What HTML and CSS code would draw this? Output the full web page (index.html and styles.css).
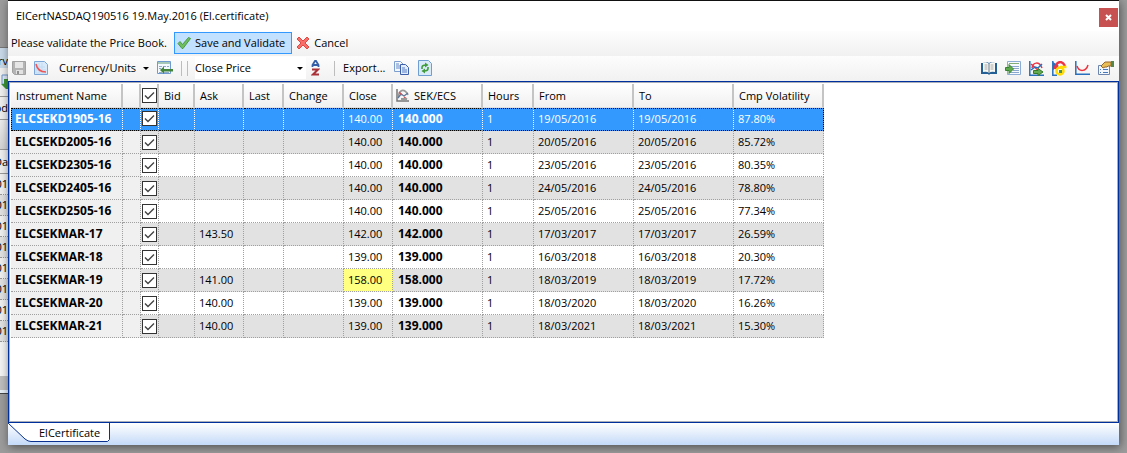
FILE: index.html
```
<!DOCTYPE html>
<html lang="en">
<head>
<meta charset="utf-8">
<title>ElCertNASDAQ190516</title>
<link rel="stylesheet" href="styles.css">
</head>
<body>
<div class="behind" aria-hidden="true">
  <div class="behind-title">rv</div>
  <div class="behind-tool"><svg width="8" height="16" viewBox="0 0 8 16"><path d="M2 1h6v9H2z" fill="#dfeaf8" stroke="#6f95c8"/><path d="M4 5v5H1l5 5h2V5z" fill="#3d9436"/></svg></div>
  <div class="behind-label">od</div>
  <div class="behind-gap"></div>
  <div class="behind-head">Da</div>
  <div class="behind-row">01</div><div class="behind-row">01</div><div class="behind-row">01</div><div class="behind-row">01</div><div class="behind-row">01</div><div class="behind-row">01</div><div class="behind-row">01</div><div class="behind-row">01</div>
  <div class="behind-scroll"></div>
</div>
<main class="window">
  <header class="titlebar">
    <h1 class="title">ElCertNASDAQ190516 19.May.2016 (El.certificate)</h1>
    <button class="close" aria-label="Close"><svg width="7" height="7" viewBox="0 0 7 7"><path d="M1 1l5 5M6 1L1 6" stroke="#fff" stroke-width="2"/></svg></button>
  </header>
  <div class="validate">
    <span class="prompt">Please validate the Price Book.</span>
    <button class="save"><svg width="14" height="14" viewBox="0 0 14 14"><path d="M1 7.500L3 5.500l2.500 3L11.500 1.500l2 1L6 12.500H5z" fill="#6fbf60" stroke="#4a9a45"/></svg>Save and Validate</button>
    <button class="cancel"><svg width="14" height="14" viewBox="0 0 14 14"><path d="M3 1l4 4 4-4 2 2-4 4 4 4-2 2-4-4-4 4-2-2 4-4-4-4z" fill="#f66f6a" stroke="#e04a45"/></svg>Cancel</button>
  </div>
  <div class="toolbar">
    <button class="tool" aria-label="Save"><svg width="14" height="14" viewBox="0 0 14 14"><path d="M.5.5h13v13h-11l-2-2z" fill="#b4b4b4" stroke="#a2a2a2"/><path d="M3 1h8v6H3z" fill="#e6e6e6"/><path d="M4 9h7v4H4z" fill="#e2e2e2"/><path d="M5 10h2v3H5z" fill="#909090"/></svg></button>
    <button class="tool" aria-label="Curve"><svg width="14" height="14" viewBox="0 0 14 14"><path d="M.5.5h10l3 3v10H.500z" fill="#d8e9fa" stroke="#7da7d9"/><path d="M2 3v9h10M2 6h9M2 9h10M5 2v10M8 2v10" stroke="#c4dbf2" fill="none"/><path d="M2 3c1 5 4 8 10 8" stroke="#ee5555" stroke-width="1.500" fill="none"/></svg></button>
    <button class="tool currency">Currency/Units<span class="arrow"></span></button>
    <button class="tool" aria-label="Import columns"><svg width="16" height="14" viewBox="0 0 16 14"><path d="M.5.5h13v12H.500z" fill="#f4f9ff" stroke="#6f9bd0"/><path d="M1 1h12v2H1z" fill="#a5c8b8"/><path d="M2 5.500h3M6 5.500h3M10 5.500h2M2 7.500h2M2 11.500h3M7 11.500h5" stroke="#8fa9c8"/><path d="M3 9l4-3.500V8h9v2.500H7V13z" fill="#43853a"/></svg></button>
    <span class="seps"><span class="sep"></span><span class="sep"></span></span>
    <div class="sorting">
      <span class="combo"><select class="price" aria-label="Price type"><option>Close Price</option></select><span class="arrow"></span></span>
      <button class="tool sort" aria-label="Sort"><svg width="9" height="16" viewBox="0 0 9 16"><path d="M1.500 7V5L4 1h1l2.500 4v2M2 5h5" stroke="#3560a8" stroke-width="1.800" fill="none"/><path d="M1 9.500h6L2 14.500h6" stroke="#aa3138" stroke-width="2" fill="none"/></svg></button>
    </div>
    <span class="sep"></span>
    <button class="tool export">Export...</button>
    <button class="tool" aria-label="Copy"><svg width="16" height="14" viewBox="0 0 16 14"><path d="M.5.500h6l3 3v7h-9z" fill="#f3f8ff" stroke="#7d9ed0"/><path d="M2 3h3M2 5h4M2 7h4" stroke="#6689c3"/><path d="M6.500 3.500h5l3 3v7h-8z" fill="#e2edff" stroke="#3e60aa"/><path d="M8 7h3M8 9h5M8 11h5" stroke="#587fc3"/></svg></button>
    <button class="tool" aria-label="Refresh"><svg width="14" height="16" viewBox="0 0 14 16"><path d="M.5.500h10l3 3v12H.500z" fill="#d9eafb" stroke="#6f9fd2"/><path d="M4 9V7.500q0-2.500 4-2.500M10 7v1.500q0 2.500-4 2.500" stroke="#429c3c" stroke-width="1.600" fill="none"/><path d="M7 2.500l3.500 2.500-3.500 2.500zM7 8.500v5L3.500 11z" fill="#429c3c"/></svg></button>
    <div class="right-tools">
      <button class="tool" aria-label="Book"><svg width="16" height="14" viewBox="0 0 16 14"><path d="M0 2h2l4-1 2 1 2-1 4 1h2v11H9l-1 1-1-1H0z" fill="#245f96"/><path d="M2 2q4-2 6 1v9q-2-2-6-1zM14 2q-4-2-6 1v9q2-2 6-1z" fill="#f7f7f3"/><path d="M3.500 4h3M3.500 6h3M3.500 8h3M9.500 4h3M9.500 6h3M9.500 8h3" stroke="#aaa"/><path d="M8 3v9" stroke="#667a8d"/></svg></button>
      <button class="tool" aria-label="Insert rows"><svg width="16" height="14" viewBox="0 0 16 14"><path d="M2.500.5h13v13h-13z" fill="#f7fbff" stroke="#8eadd5"/><path d="M4 2.500h10" stroke="#83ad76"/><path d="M5 5.500h9M8 7.500h6M8 9.500h6M5 11.500h9" stroke="#8ba6cf"/><path d="M.5 6.500H4v-3L8.500 8 4 12.500v-3H.500z" fill="#5ea94e" stroke="#388331"/></svg></button>
      <button class="tool" aria-label="Export chart"><svg width="15" height="15" viewBox="0 0 15 15"><path d="M.8 0v14.200H15" stroke="#2870bd" stroke-width="1.500" fill="none"/><path d="M3 7C4 1 10 0 13 7M2 3l9 8" stroke="#ed3344" stroke-width="1.500" fill="none"/><path d="M2 9l4-3 3 1 4-4" stroke="#2870bd" stroke-width="1.500" fill="none"/><path d="M4.500 9.500H9v-2l5 3.500-5 3.500v-2H4.500z" fill="#63aa50" stroke="#347b2d"/></svg></button>
      <button class="tool" aria-label="Reload chart"><svg width="15" height="15" viewBox="0 0 15 15"><path d="M.8 0v14.200H5" stroke="#2870bd" stroke-width="1.500" fill="none"/><path d="M1 1l6 4-6 4z" fill="#2870bd"/><path d="M3 8C4 0 10-1 13 5M3 5l5 4" stroke="#ed3344" stroke-width="2.500" fill="none"/><circle cx="8" cy="10" r="3.500" fill="#fff" stroke="#ffdb00" stroke-width="2.500"/><path d="M8 6h6.500" stroke="#ffdb00" stroke-width="2.500"/><path d="M7 9h3v3H7z" fill="#4a8d4c"/></svg></button>
      <button class="tool" aria-label="Volatility smile"><svg width="15" height="14" viewBox="0 0 15 14"><path d="M.8 0v13.200H15" stroke="#2870bd" stroke-width="1.500" fill="none"/><path d="M2 5c2 6 9 6 11-1" stroke="#ef323d" stroke-width="1.500" fill="none"/></svg></button>
      <button class="tool" aria-label="Properties"><svg width="16" height="14" viewBox="0 0 16 14"><path d="M.5 4.500h11v9H.500z" fill="#f4f7fc" stroke="#6e86ae"/><path d="M2 8.500h1M5 8.500h5M2 11.500h1M5 11.500h5" stroke="#4777bd"/><path d="M3 5l4-4h6v4h-3L9 6H7L5 7z" fill="#e8bd55" stroke="#94672c"/><path d="M13 0h3v6h-3z" fill="#53884d"/></svg></button>
    </div>
  </div>
  <section class="grid-pane">
    <table class="grid">
      <colgroup><col class="c-name"><col class="c-mark"><col class="c-mark"><col class="c-bid"><col class="c-ask"><col class="c-last"><col class="c-change"><col class="c-close"><col class="c-sek"><col class="c-hours"><col class="c-date"><col class="c-date"><col class="c-vol"></colgroup>
      <thead><tr><th>Instrument Name</th><th></th><th class="check"><input type="checkbox" checked aria-label="Select all"></th><th>Bid</th><th>Ask</th><th>Last</th><th>Change</th><th>Close</th><th class="sek"><div class="with-icon"><svg width="13" height="13" viewBox="0 0 13 13"><path d="M1 0v12h12" stroke="#777" stroke-width="1.500" fill="none"/><path d="M2 8C4-1 9 0 12 6" stroke="#999" stroke-width="1.600" fill="none"/><path d="M2 9l3-4 3 2 4-3" stroke="#5d7899" stroke-width="1.300" fill="none"/><path d="M3 3l3 3M8 8l3 2" stroke="#cf555b" stroke-width="1.500"/><path d="M5 9h6v2H5z" fill="#999"/></svg>SEK/ECS</div></th><th>Hours</th><th>From</th><th>To</th><th>Cmp Volatility</th></tr></thead>
      <tbody id="rows"></tbody>
    </table>
  </section>
  <footer class="tabs"><button class="tab"><svg width="103" height="20" viewBox="0 0 103 20"><path d="M0 0L17 16q3 2.500 6 2.500h76.500l2-2V0" fill="#fff" stroke="#0a3191"/></svg><span class="tab-label">ElCertificate</span></button></footer>
</main>
<script src="rows.js"></script>
</body>
</html>
```
FILE: styles.css
```
* { box-sizing: border-box; }
body { margin: 0; min-height: 100vh; padding: 0 8px 8px; background: #9c9c9c; display: flex; font: 11px/16px "Open Sans", "Noto Sans", sans-serif; color: #000; }
button { font: inherit; color: inherit; border: 0; background: none; padding: 0; white-space: nowrap; }
svg { display: block; flex: none; }

.behind { position: absolute; left: 0; top: 47px; width: 8px; overflow: hidden; background: #f0f0f0; border-top: 1px solid #777; border-bottom: 1px solid #444; }
.behind div { display: flex; justify-content: flex-end; }
.behind-title { height: 20px; background: #c9d9e8; line-height: 26px; }
.behind-tool { height: 28px; padding-top: 6px; }
.behind-label { height: 24px; border-top: 1px solid #999; border-bottom: 1px solid #999; line-height: 22px; }
.behind-gap { height: 29px; background: linear-gradient(#eee, #d4d4d4); }
.behind-head { height: 25px; border: solid #999; border-width: 1px 0; line-height: 24px; }
.behind-row { height: 21px; border-bottom: 1px dotted #999; line-height: 20px; }
.behind-row:nth-child(odd) { background: #e2e2e2; }
.behind-scroll { height: 51px; background: linear-gradient(#f4f4f4 34px, #bebebe 34px, #bebebe 48px, #e8f0f8 48px); }

.window { position: relative; flex: 1; min-width: 0; display: flex; flex-direction: column; background: #fff; border-top: 1px solid #111; box-shadow: 1px 2px 9px rgba(0, 0, 0, .5); }
.titlebar { height: 30px; display: flex; justify-content: space-between; padding: 7px 1px 0 8px; }
.title { margin: 0; font: inherit; }
.close { width: 19px; height: 19px; background: #c75050; display: grid; place-items: center; }

.validate { height: 25px; display: flex; align-items: center; padding: 0 3px 1px; background: linear-gradient(#fdfdfd, #f1f1f1); }
.prompt { min-width: 163px; }
.save, .cancel { height: 22px; display: flex; align-items: center; gap: 4px; }
.save { border: 1px solid #3399ff; background: #c2e0ff; padding: 0 6px 0 2px; margin-right: 4px; }

.toolbar { height: 25px; display: flex; align-items: center; padding: 0 5px 1px 4px; background: linear-gradient(#fdfdfd, #f1f1f1); gap: 8px; }
.tool { display: flex; align-items: center; flex: none; }
.currency { padding: 0 0 0 3px; gap: 7px; }
.arrow { border: 3px solid transparent; border-top-color: #000; border-bottom: 0; }
.seps { display: flex; gap: 5px; }
.sep { width: 1px; height: 15px; background: #bdbdbd; }
.sorting { display: flex; align-items: center; gap: 5px; margin: 0 6px 0 -1px; }
.combo { display: grid; grid-template-columns: 111px; align-items: center; }
.combo > * { grid-area: 1 / 1; }
.combo .arrow { justify-self: end; margin-right: 3px; pointer-events: none; }
.price { appearance: none; width: 100%; height: 22px; border: 0; padding: 0; font: inherit; color: #000; background: #fff; }
.export { min-width: 43px; }
.right-tools { display: flex; align-items: center; gap: 8px; margin-left: auto; }

.grid-pane { flex: 1; border: 1px solid #00309c; box-shadow: inset 0 0 0 1px #a9aeb8; padding: 2px; }
.grid { width: 813px; border-collapse: separate; border-spacing: 0; table-layout: fixed; }
.c-name { width: 112px; }
.c-mark { width: 18px; }
.c-bid { width: 36px; }
.c-ask, .c-close { width: 49px; }
.c-last { width: 40px; }
.c-change { width: 60px; }
.c-sek, .c-vol { width: 90px; }
.c-hours { width: 51px; }
.c-date { width: 100px; }
th, td { padding: 0 0 0 4px; text-align: left; vertical-align: middle; white-space: nowrap; font-weight: 400; }
thead th { height: 24px; padding-left: 5px; background: linear-gradient(#fff, #f0f0f0); border-right: 2px solid #c4c4c4; border-bottom: 1px solid #e0e0e0; }
thead .sek { padding-left: 3px; }
.with-icon { display: flex; align-items: center; gap: 5px; }
tbody th, td { height: 23px; border-right: 1px dotted #a0a0a0; border-bottom: 1px dotted #a0a0a0; }
tbody th, .strong { font-size: 12px; font-weight: 700; }
.strong { padding-left: 5px; }
tbody tr:nth-child(even) { background: #e2e2e2; }
tbody th, tbody .mark { background: #f0f0f0; }
.check, thead .check { padding: 0 0 0 1px; }
input { appearance: none; display: block; width: 15px; height: 15px; margin: 0; border: 1px solid #333; background: #fff url("data:image/svg+xml,%3Csvg xmlns='http://www.w3.org/2000/svg' viewBox='0 0 13 13'%3E%3Cpath d='M2 6.500l3 3 6-6' fill='none' stroke='%23444' stroke-width='1.400'/%3E%3C/svg%3E"); }
.changed { background: #ffff80; }
tbody .selected > * { background: #3399ff; color: #fff; border-top: 1px dotted #000; border-bottom-color: #000; border-right-color: #fff; padding-bottom: 2px; }
tbody .selected > :first-child { border-left: 1px dotted #000; padding-left: 3px; }
tbody .selected > :last-child { border-right-color: #000; }

.tabs { height: 22px; background: linear-gradient(#fff, #c4daf8); }
.tab { display: grid; align-items: center; text-align: left; }
.tab > * { grid-area: 1 / 1; }
.tab-label { padding-left: 31px; }
```
FILE: rows.js
```
const rows = [
  ["ELCSEKD1905-16", "", "140.00", "140.000", "19/05/2016", "19/05/2016", "87.80%"],
  ["ELCSEKD2005-16", "", "140.00", "140.000", "20/05/2016", "20/05/2016", "85.72%"],
  ["ELCSEKD2305-16", "", "140.00", "140.000", "23/05/2016", "23/05/2016", "80.35%"],
  ["ELCSEKD2405-16", "", "140.00", "140.000", "24/05/2016", "24/05/2016", "78.80%"],
  ["ELCSEKD2505-16", "", "140.00", "140.000", "25/05/2016", "25/05/2016", "77.34%"],
  ["ELCSEKMAR-17", "143.50", "142.00", "142.000", "17/03/2017", "17/03/2017", "26.59%"],
  ["ELCSEKMAR-18", "", "139.00", "139.000", "16/03/2018", "16/03/2018", "20.30%"],
  ["ELCSEKMAR-19", "141.00", "158.00", "158.000", "18/03/2019", "18/03/2019", "17.72%"],
  ["ELCSEKMAR-20", "140.00", "139.00", "139.000", "18/03/2020", "18/03/2020", "16.26%"],
  ["ELCSEKMAR-21", "140.00", "139.00", "139.000", "18/03/2021", "18/03/2021", "15.30%"]
];
document.getElementById("rows").innerHTML = rows.map((r, i) => `<tr${i === 0 ? ' class="selected"' : ""}>
  <th scope="row">${r[0]}</th><td class="mark"></td>
  <td class="check"><input type="checkbox" checked aria-label="${r[0]}"></td>
  <td></td><td>${r[1]}</td><td></td><td></td>
  <td${r[2] === "158.00" ? ' class="changed"' : ""}>${r[2]}</td>
  <td class="strong">${r[3]}</td><td>1</td><td>${r[4]}</td><td>${r[5]}</td><td>${r[6]}</td>
</tr>`).join("");
```
